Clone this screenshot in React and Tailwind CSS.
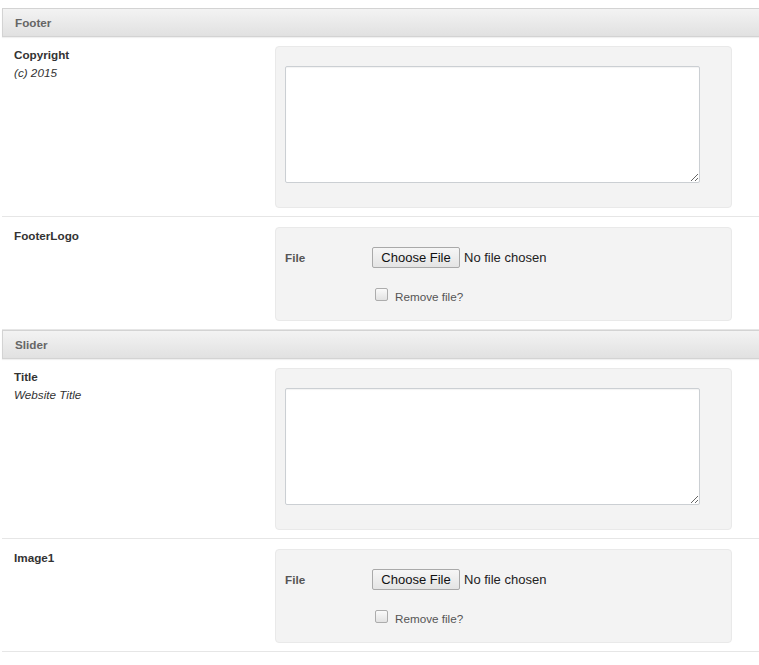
import React from "react";

const SectionHeader = ({ title }) => (
  <div className="h-[29px] border border-r-0 border-[#d3d3d3] bg-gradient-to-b from-[#f3f3f3] to-[#e1e1e1] pl-[12px] flex items-center shadow-[0_1px_1px_rgba(0,0,0,0.06)]">
    <span className="text-[11.7px] font-bold text-[#666]">{title}</span>
  </div>
);

const FieldRow = ({ label, help, top = "pt-[10px]", children }) => (
  <div className={`flex ${top} pb-[8px] border-b border-[#e6e6e6]`}>
    <div className="w-[273px] shrink-0 pl-[12px] pt-[2px]">
      <div className="text-[11.7px] font-bold text-[#333] leading-[14px]">{label}</div>
      {help && (
        <div className="text-[11.7px] italic text-[#333] leading-[14px] mt-[4px]">{help}</div>
      )}
    </div>
    <div className="w-[457px] shrink-0 rounded-[4px] border border-[#e9e9e9] bg-[#f3f3f3]">
      {children}
    </div>
  </div>
);

const TextWell = () => (
  <div className="pl-[9px] pt-[19px] pb-[24px]">
    <textarea className="block w-[415px] h-[117px] rounded-[2px] border border-[#cbcfd3] bg-white shadow-[inset_0_1px_1px_rgba(0,0,0,0.05)] outline-none" />
  </div>
);

const FileWell = () => (
  <div className="pl-[9px] pt-[19px] pb-[18px]">
    <div className="flex items-center h-[21px]">
      <div className="w-[87px] text-[11.7px] font-bold text-[#555]">File</div>
      <div className="h-[21px] w-[88px] rounded-[2px] border border-[#a9a9a9] bg-gradient-to-b from-[#f6f6f6] to-[#e4e4e4] text-[13px] text-[#111] flex items-center justify-center">
        Choose File
      </div>
      <span className="ml-[4px] text-[13px] text-[#222]">No file chosen</span>
    </div>
    <div className="flex items-center mt-[20px] pl-[90px] h-[14px]">
      <span className="w-[13px] h-[13px] -mt-[1px] rounded-[2px] border border-[#acacac] bg-gradient-to-b from-[#fafafa] to-[#e2e2e2]" />
      <span className="ml-[7px] text-[11.7px] text-[#555] translate-y-[2px]">Remove file?</span>
    </div>
  </div>
);

export default function App() {
  return (
    <div className="bg-white min-h-[665px] pt-[8px] pl-[2px] font-['Liberation_Sans',Arial,sans-serif]">
      <SectionHeader title="Footer" />
      <FieldRow label="Copyright" help="(c) 2015" top="pt-[9px]">
        <TextWell />
      </FieldRow>
      <FieldRow label="FooterLogo">
        <FileWell />
      </FieldRow>
      <SectionHeader title="Slider" />
      <FieldRow label="Title" help="Website Title" top="pt-[9px]">
        <TextWell />
      </FieldRow>
      <FieldRow label="Image1">
        <FileWell />
      </FieldRow>
    </div>
  );
}
